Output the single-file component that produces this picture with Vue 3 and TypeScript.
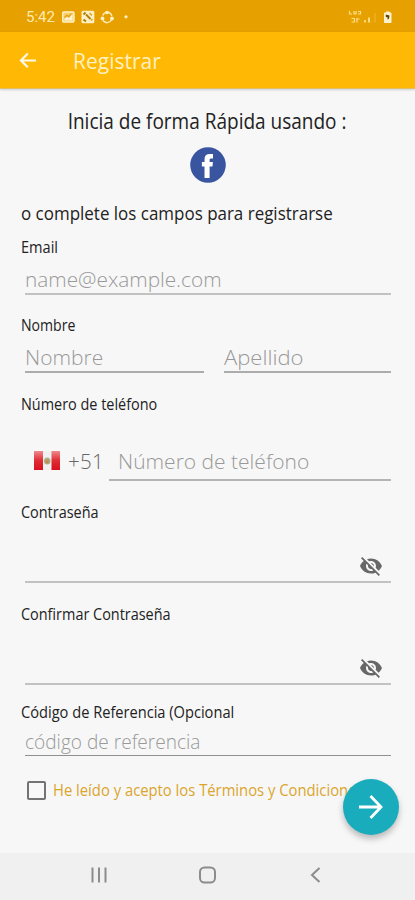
<script setup lang="ts">
import { ref } from 'vue'

const email = ref('')
const firstName = ref('')
const lastName = ref('')
const phone = ref('')
const referral = ref('')
const accepted = ref(false)

const eyeOff =
  'M12 7c2.76 0 5 2.24 5 5 0 .65-.13 1.26-.36 1.83l2.92 2.92c1.51-1.26 2.7-2.89 3.43-4.75-1.73-4.39-6-7.5-11-7.5-1.4 0-2.74.25-3.98.7l2.16 2.16C10.74 7.13 11.35 7 12 7zM2 4.27l2.28 2.28.46.46C3.08 8.3 1.78 10.02 1 12c1.73 4.39 6 7.5 11 7.5 1.55 0 3.03-.3 4.38-.84l.42.42L19.73 22 21 20.73 3.27 3 2 4.27zM7.53 9.8l1.55 1.55c-.05.21-.08.43-.08.65 0 1.66 1.34 3 3 3 .22 0 .44-.03.65-.08l1.55 1.55c-.67.33-1.41.53-2.2.53-2.76 0-5-2.24-5-5 0-.79.2-1.53.53-2.2zm4.31-.78l3.15 3.15.02-.16c0-1.66-1.34-3-3-3l-.17.01z'

const passwords = [
  { id: 'password', label: 'Contraseña' },
  { id: 'confirm', label: 'Confirmar Contraseña' },
]
</script>

<template>
  <div class="screen">
    <div class="status">
      <span class="time">5:42</span>
      <svg class="s-left" width="70" height="16" viewBox="0 0 70 16">
        <rect x="0.700" y="3" width="11.300" height="10" rx="1" fill="#f7cf66" stroke="#fff0c4" stroke-width="1.400" />
        <path d="M2.500 11.500V9.800l2.500-2 1.800 1.400L10.500 5v6.500z" fill="#fff3d2" />
        <path d="M2.500 8.500 5 6.300l1.700 1.400L9.500 4.500" stroke="#dd9c08" stroke-width="1.100" fill="none" />
        <rect x="19.500" y="1.800" width="12.800" height="12.500" rx="1.500" fill="#fff0c4" />
        <path d="M21.500 5.500l2-2M24 5.500l4.500 4.500M21.500 10.500l2.500 2" stroke="#b17e08" stroke-width="1.900" fill="none" />
        <path d="M27.500 4l2.500 2.500M29 11.500l1.500-1.500" stroke="#dca42a" stroke-width="1.600" fill="none" />
        <path d="M40.800 6.500A5 5 0 0 1 45 3.200 5 5 0 0 1 49.800 7M49.500 11A5 5 0 0 1 41 11.500" stroke="#ffeab0" stroke-width="1.500" fill="none" />
        <circle cx="45" cy="3.500" r="1.800" fill="#fff0c4" /><circle cx="50" cy="9.500" r="1.900" fill="#fff0c4" /><circle cx="40.500" cy="9.500" r="1.900" fill="#fff0c4" />
        <circle cx="64" cy="7.800" r="1.600" fill="#fff0c4" />
      </svg>
      <svg class="s-right" width="46" height="18" viewBox="0 0 46 18">
        <g fill="none" stroke="#ffdf88" stroke-width="1.200">
          <path d="M1.500 3v3h2.500M6 3v3h2V3M10 3.500h2.500v2.500H10M3.500 10.500h3v3.500h-3M9 10v4.500M9 11h2.500" />
          <path d="M17 12v2.500M21 9.500v5" stroke-width="1.800" />
          <path d="M23.500 13v1.500M27 5v9.500" opacity=".3" />
        </g>
        <path d="M36.500 5h1.800V4h3v1h1.700v9.500h-6.500z" fill="#fff2cf" stroke="#fff2cf" />
        <path d="M37.800 6.500l3.700 1-.5 3.300-1.600.7.300-2-1.900-.5z" fill="#5f430b" />
      </svg>
    </div>

    <header class="bar">
      <svg width="24" height="24" viewBox="0 0 24 24">
        <path d="M20 12.500H5M11.800 5.500 5 12.500l6.800 6.800" stroke="#fffae8" stroke-width="2.200" fill="none" />
      </svg>
      <h1>Registrar</h1>
    </header>

    <main>
      <h2><span>Inicia de forma Rápida usando :</span></h2>
      <button class="fb" aria-label="Facebook">
        <svg width="36" height="36" viewBox="0 0 36 36">
          <circle cx="18" cy="18" r="17.800" fill="#39559f" />
          <path d="M14.500 31V19.500h-2.600V15h2.600v-2.500c0-3.700 1.900-5.500 5.200-5.500h3.300v4.500h-1.900c-1.100 0-1.500.5-1.500 1.500v2h3.300l-.4 4.500h-2.900V31z" fill="#fff" />
        </svg>
      </button>
      <p class="lead"><span>o complete los campos para registrarse</span></p>

      <label class="label w-email" for="email">Email</label>
      <div class="field f-email">
        <input id="email" v-model="email" class="p-email" placeholder="name@example.com" />
      </div>

      <label class="label w-name" for="first">Nombre</label>
      <div class="names">
        <div class="field"><input id="first" v-model="firstName" class="p-name" placeholder="Nombre" /></div>
        <div class="field"><input v-model="lastName" class="p-last" placeholder="Apellido" /></div>
      </div>

      <label class="label w-phone" for="phone">Número de teléfono</label>
      <div class="phone">
        <div class="country">
          <svg width="26" height="20" viewBox="0 0 26 20">
            <defs>
              <linearGradient id="red" x1="0" y1="0" x2="0" y2="1">
                <stop offset="0" stop-color="#ee8a8c" /><stop offset=".5" stop-color="#df2c35" /><stop offset="1" stop-color="#d9101d" />
              </linearGradient>
            </defs>
            <path d="M0 0h26v19H0z" fill="#f1f0f0" />
            <path d="M0 0h9v19H0zM17.500 0H26v19h-8.500z" fill="url(#red)" />
            <ellipse cx="13.200" cy="10" rx="3.300" ry="3.600" fill="#a9b18c" />
            <circle cx="13.200" cy="10.500" r="1.900" fill="#c58d51" />
          </svg>
          <span class="code">+51</span>
        </div>
        <div class="field"><input id="phone" v-model="phone" class="p-phone" placeholder="Número de teléfono" /></div>
      </div>

      <template v-for="p in passwords" :key="p.id">
        <label class="label" :class="'w-' + p.id" :for="p.id">{{ p.label }}</label>
        <div class="field secret" :class="'f-' + p.id">
          <input :id="p.id" type="password" />
          <svg width="24" height="24" viewBox="0 0 24 24"><path :d="eyeOff" fill="#686868" /></svg>
        </div>
      </template>

      <label class="label w-ref" for="ref">Código de Referencia (Opcional</label>
      <div class="field f-ref">
        <input id="ref" v-model="referral" class="p-ref" placeholder="código de referencia" />
      </div>

      <div class="terms">
        <button class="box" role="checkbox" :aria-checked="accepted" @click="accepted = !accepted"></button>
        <span>He leído y acepto los Términos y Condiciones</span>
      </div>
    </main>

    <button class="fab" aria-label="Continuar">
      <svg width="28" height="28" viewBox="0 0 28 28">
        <path d="M2 14h22M13.500 3 24 14l-10.500 11" stroke="#fff" stroke-width="2.800" fill="none" />
      </svg>
    </button>

    <nav>
      <svg width="18" height="18" viewBox="0 0 18 18"><path d="M2.500 1.500v15M9 1.500v15M15.500 1.500v15" stroke="#8c8c8c" stroke-width="2" /></svg>
      <svg width="18" height="18" viewBox="0 0 18 18"><rect x="1" y="1.500" width="15" height="15" rx="4.500" fill="none" stroke="#8c8c8c" stroke-width="2" /></svg>
      <svg width="18" height="18" viewBox="0 0 18 18"><path d="M12.500 2 5 9l7.500 7" stroke="#8c8c8c" stroke-width="2" fill="none" /></svg>
    </nav>
  </div>
</template>

<style>
body {
  margin: 0;
  background: #f7f7f7;
}
</style>

<style scoped>
.screen {
  position: relative;
  display: flex;
  flex-direction: column;
  width: 415px;
  height: 900px;
  overflow: hidden;
  background: #f7f7f7;
  font-family: 'Open Sans', 'Noto Sans', sans-serif;
  color: #222;
}
* { box-sizing: border-box; }
svg { display: block; flex: none; }
button { padding: 0; border: 0; background: none; }
h1, h2, p { margin: 0; font-weight: 400; }

.status {
  display: flex;
  align-items: center;
  height: 32px;
  padding: 2px 26px 0;
  background: #e6a100;
}
.time {
  width: 36px;
  font: 15px Roboto, sans-serif;
  color: #ffe9ae;
  white-space: nowrap;
}
.s-right { margin-left: auto; margin-right: -5px; }

.bar {
  display: flex;
  align-items: center;
  gap: 33px;
  height: 57px;
  padding-left: 16px;
  background: #ffb804;
  border-bottom: 1px solid #e0bf68;
  box-shadow: 0 1px 2px rgba(0, 0, 0, .16);
}
h1 {
  padding-top: 1px;
  font-size: 21px;
  line-height: 30px;
  color: #fff0c2;
}

main {
  display: flex;
  flex-direction: column;
  padding: 15px 24px 0 21px;
}
h2 {
  height: 34px;
  margin-left: 3px;
  text-align: center;
  font-size: 21px;
  line-height: 35px;
  white-space: nowrap;
}
h2 span { display: inline-block; transform: scaleX(.905); }
.fb { align-self: center; width: 36px; height: 36px; margin: 9px 0 17px 4px; }
.lead { height: 26px; font-size: 18.500px; line-height: 26px; white-space: nowrap; }
.lead span { display: inline-block; transform: scaleX(.917); transform-origin: left; }

.label {
  align-self: flex-start;
  height: 20px;
  margin-top: 21px;
  font-size: 16px;
  line-height: 20px;
  white-space: nowrap;
  transform: scaleX(.902);
  transform-origin: left;
}
.w-email { margin-top: 11px; transform: scaleX(.91); }
.w-name { margin-top: 20px; transform: scaleX(.88); }
.w-ref { margin-top: 17px; transform: scaleX(.914); }

.field {
  display: flex;
  align-items: center;
  height: 38px;
  margin-left: 4px;
  padding-top: 7px;
  border-bottom: 2px solid #c2c2c2;
}
input {
  flex: 1;
  width: 100%;
  min-width: 0;
  height: 30px;
  padding: 0;
  border: 0;
  outline: 0;
  background: none;
  font: 300 21px 'Open Sans', 'Noto Sans', sans-serif;
  color: #444;
  transform-origin: left;
}
input::placeholder { color: #999; opacity: 1; }
.p-email { transform: scaleX(.99); }
.p-last { transform: scaleX(1.05); }
.names { display: grid; grid-template-columns: 183px 171px; gap: 16px; margin-top: 1px; }
.names .field { border-color: #acacac; height: 37px; }

.phone { display: flex; height: 67px; }
.phone .field { flex: 1; height: 67px; padding: 28px 0 0 9px; border-color: #b4b4b4; margin-left: 0; }
.country { display: flex; align-items: center; gap: 8px; width: 88px; padding: 27px 0 0 13px; }
.code { font-size: 20.500px; font-weight: 300; color: #666; line-height: 28px; letter-spacing: .3px; }

.secret { height: 61px; padding: 28px 8px 0 0; }
.f-ref { height: 34px; padding-top: 6px; border-color: #8f8f8f; border-bottom-width: 1px; }
.p-ref { font-size: 19.500px; transform: scaleX(.978); }

.terms { display: flex; align-items: center; gap: 7px; height: 22px; margin: 23px 0 0 6px; }
.box { flex: none; width: 19px; height: 19px; border: 2px solid #737373; border-radius: 2px; }
.terms span {
  font-size: 16px;
  line-height: 22px;
  color: #dba52c;
  white-space: nowrap;
  transform: scaleX(.925);
  transform-origin: left;
}

.fab {
  position: absolute;
  left: 343px;
  top: 779px;
  display: grid;
  place-items: center;
  width: 56px;
  height: 56px;
  border-radius: 50%;
  background: #18acbd;
  box-shadow: 0 4px 6px rgba(0, 0, 0, .25);
}

nav {
  display: flex;
  align-items: center;
  justify-content: space-between;
  height: 47px;
  margin-top: auto;
  padding: 0 90px 3px;
  background: #f0f0f0;
}
</style>
